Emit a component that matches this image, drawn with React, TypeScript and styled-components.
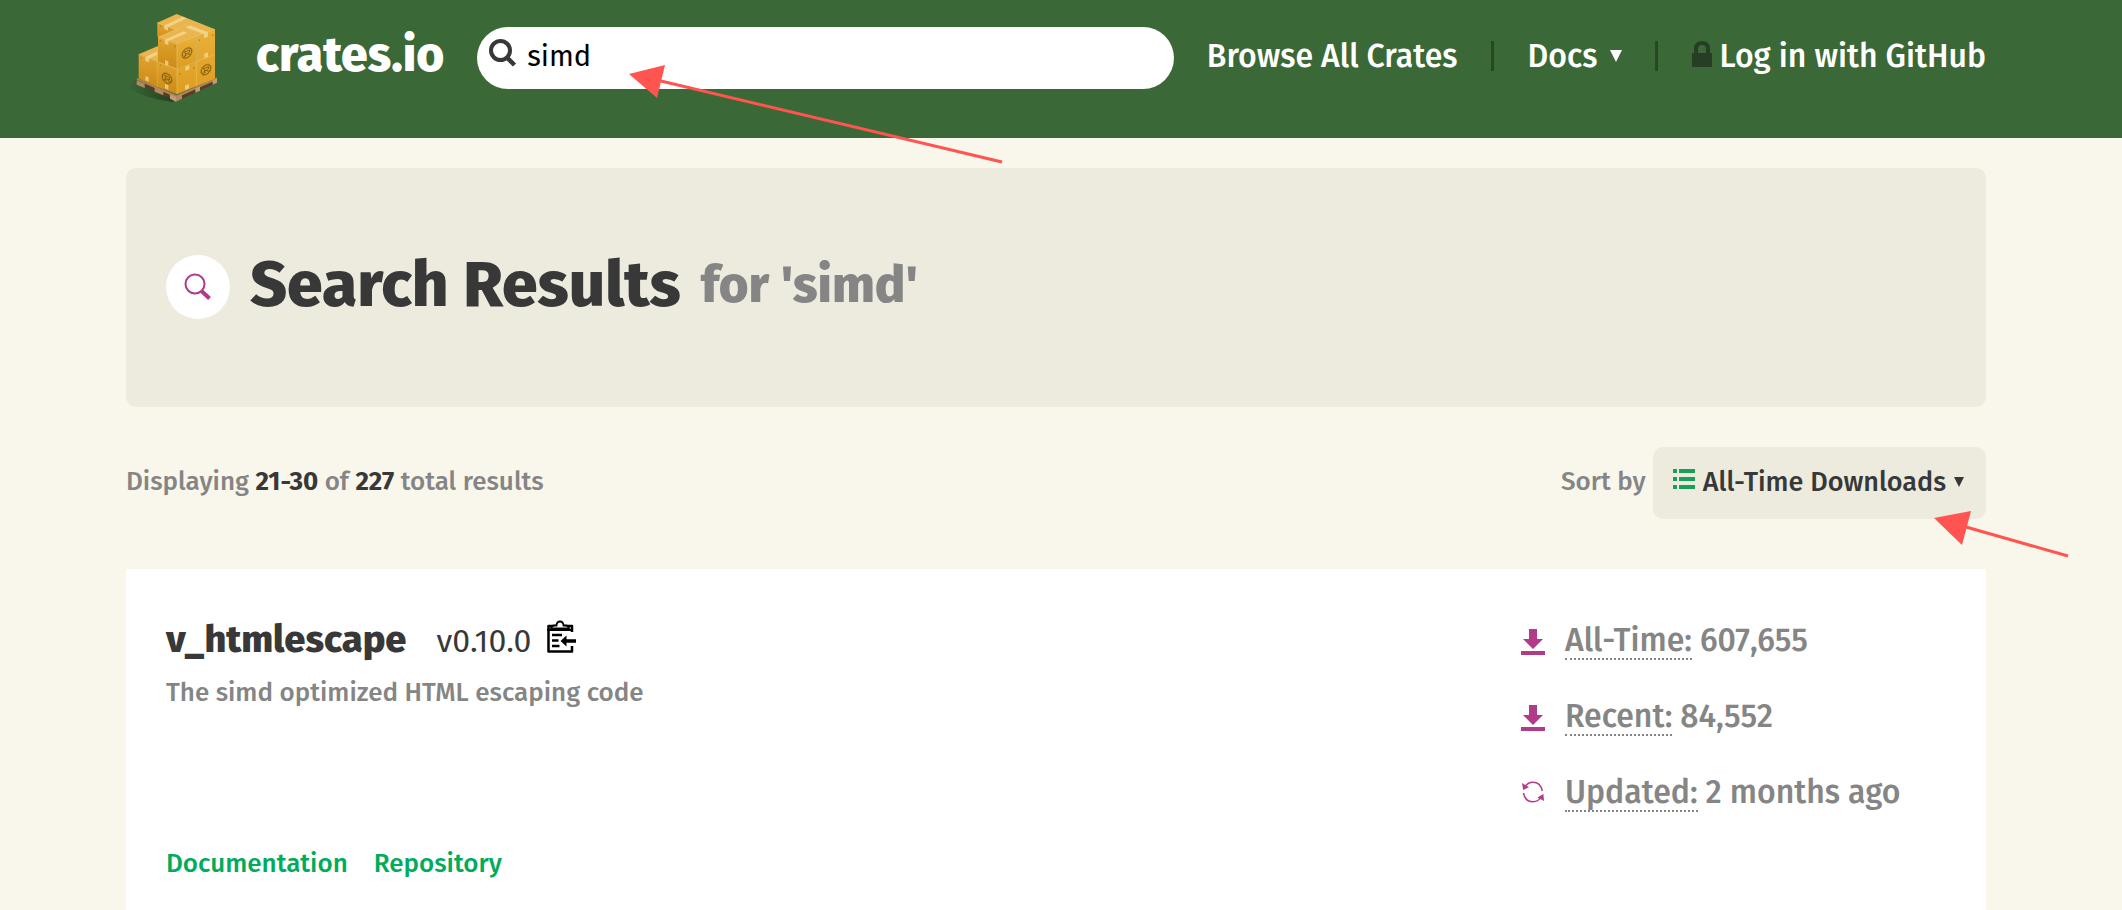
import React, { useState } from 'react';
import styled, { createGlobalStyle } from 'styled-components';

const colors = {
  green: '#3b6837',
  darkGreen: '#284725',
  cream: '#f9f7ec',
  sand: '#ecebde',
  text: '#383838',
  muted: '#858585',
  link: '#00ac5b',
  purple: '#b13b89',
  red: '#ff544f',
};

const GlobalStyle = createGlobalStyle`
  *, *::before, *::after { box-sizing: border-box; }
  body {
    margin: 0;
    background: ${colors.cream};
    color: ${colors.text};
    font-family: "Fira Sans", "Noto Sans CJK JP", "Noto Sans", sans-serif;
    font-weight: 500;
    -webkit-font-smoothing: antialiased;
  }
  button, input { font: inherit; color: inherit; border: 0; background: none; }
  a { color: inherit; text-decoration: none; }
  h1, h2, p, ul { margin: 0; padding: 0; font-size: inherit; }
  ul { list-style: none; }
  svg { display: block; flex: none; }
`;

const Page = styled.div`
  display: flex;
  flex-direction: column;
  min-height: 100vh;
  overflow-x: clip;
`;

const Header = styled.header`
  display: flex;
  align-items: flex-start;
  padding: 12px 136px 34px 126px;
  background: ${colors.green};
  color: #fff;
`;

const HomeLink = styled.a`
  display: flex;
  align-items: flex-start;
  gap: 38px;
  margin-right: 33px;
  font-size: 48px;
  font-weight: 800;
  line-height: 86px;
`;

const SearchForm = styled.form`
  position: relative;
  flex: 1;
  min-width: 200px;
  margin: 15px 33px 0 0;
`;

const SearchInput = styled.input`
  display: block;
  width: 100%;
  height: 62px;
  padding: 0 20px 4px 50px;
  border-radius: 31px;
  background: #fff;
  color: #000;
  font-size: 29px;
  font-weight: 400;
  outline: 0;
`;

const SearchGlyph = styled.svg`
  position: absolute;
  left: 11px;
  top: 11px;
`;

const Nav = styled.nav`
  display: flex;
  align-items: center;
  height: 88px;
  font-size: 32px;
  line-height: 40px;
  white-space: nowrap;
`;

const Divider = styled.span`
  width: 3px;
  height: 30px;
  margin: 0 34px 0 33px;
  background: ${colors.darkGreen};
`;

const MenuButton = styled.button`
  display: flex;
  align-items: center;
  gap: 12px;
  padding: 0;
`;

const NavLink = styled.a`
  display: flex;
  align-items: center;
  gap: 8px;
`;

const Main = styled.main`
  flex: 1;
  display: flex;
  flex-direction: column;
  padding: 30px 136px 0 126px;
`;

const Banner = styled.section`
  display: flex;
  align-items: center;
  gap: 20px;
  padding: 85px 40px 86px;
  border-radius: 10px;
  background: ${colors.sand};
`;

const BannerIcon = styled.span`
  display: grid;
  place-items: center;
  width: 64px;
  height: 64px;
  border-radius: 50%;
  background: #fff;
`;

const Title = styled.h1`
  display: flex;
  align-items: center;
  gap: 20px;
  padding-bottom: 4px;
  font-size: 64px;
  font-weight: 800;
  line-height: 64px;
`;

const Query = styled.span`
  color: ${colors.muted};
  font-size: 51px;
`;

const ResultsBar = styled.div`
  display: flex;
  align-items: center;
  justify-content: space-between;
  margin: 40px 0 50px;
  color: ${colors.muted};
  font-size: 26px;
  line-height: 34px;
`;

const BarText = styled.p`
  padding-bottom: 2px;
`;

const Strong = styled.strong`
  color: ${colors.text};
  font-weight: 700;
`;

const Sort = styled.div`
  position: relative;
  display: flex;
  align-items: center;
  gap: 7px;
`;

const SortButton = styled.button`
  display: flex;
  align-items: center;
  gap: 8px;
  padding: 18px 22px 20px 20px;
  border-radius: 10px;
  background: ${colors.sand};
  color: ${colors.text};
  font-size: 27px;
  line-height: 34px;
`;

const Card = styled.article`
  flex: 1;
  display: flex;
  justify-content: space-between;
  padding: 40px 40px 24px;
  background: #fff;
`;

const Heading = styled.div`
  display: flex;
  align-items: baseline;
  line-height: 60px;
`;

const CrateName = styled.h2`
  margin-right: 30px;
  font-size: 38px;
  font-weight: 800;
`;

const Version = styled.span`
  margin-right: 16px;
  font-size: 32px;
  font-weight: 400;
`;

const CopyButton = styled.button`
  align-self: center;
  padding: 0 0 8px;
  color: #000;
`;

const Description = styled.p`
  margin: 4px 0 135px;
  color: ${colors.muted};
  font-size: 26px;
  line-height: 36px;
`;

const Links = styled.ul`
  display: flex;
  gap: 26px;
  color: ${colors.link};
  font-size: 26px;
  line-height: 36px;
`;

const Stats = styled.ul`
  display: flex;
  flex-direction: column;
  gap: 14px;
  width: 425px;
  color: ${colors.muted};
  font-size: 32px;
`;

const Stat = styled.li`
  display: flex;
  align-items: center;
  gap: 20px;
  line-height: 62px;
`;

const StatLabel = styled.span`
  display: inline-block;
  margin-right: 8px;
  border-bottom: 2px dotted ${colors.muted};
  line-height: 36px;
`;

const SearchArrow = styled.svg`
  position: absolute;
  left: 150px;
  top: 34px;
  pointer-events: none;
`;

const SortArrow = styled.svg`
  position: absolute;
  right: -84px;
  top: 62px;
  pointer-events: none;
`;

const Caret = ({ size, color }: { size: number; color: string }) => (
  <svg width={size} height={size} viewBox="0 0 12 12" aria-hidden="true">
    <path d="M0 0h12L6 12z" fill={color} />
  </svg>
);

const RustMark = ({ x, y, skew }: { x: number; y: number; skew: number }) => (
  <g transform={`translate(${x} ${y}) skewY(${skew})`} fill="none" stroke="#8a6212">
    <circle r="14" strokeWidth="3" />
    <circle r="16" strokeWidth="2" strokeDasharray="2 3" />
    <path d="M-9-6H3q5 0 5 4t-5 4h-8M-5-6V7M-9 7h8M2 2l4 5h5" strokeWidth="3" />
  </g>
);

const CratesLogo = () => (
  <svg width="92" height="92" viewBox="18 36 276 276" aria-hidden="true">
    <defs>
      <linearGradient id="shade" x1="0" x2="1">
        <stop offset="0" stopColor="#1d3a1a" stopOpacity="0" />
        <stop offset="1" stopColor="#1d3a1a" stopOpacity=".9" />
      </linearGradient>
      <linearGradient id="left" x1="0" x2="0" y1="0" y2="1">
        <stop offset="0" stopColor="#e0a42f" />
        <stop offset="1" stopColor="#cb8b16" />
      </linearGradient>
      <linearGradient id="right" x1="0" x2="0" y1="0" y2="1">
        <stop offset="0" stopColor="#e9b038" />
        <stop offset="1" stopColor="#dd9d20" />
      </linearGradient>
    </defs>
    <path d="M18 262l36-28 116 56-10 16q-80-8-142-44z" fill="url(#shade)" />
    <path d="M50 236l120 52 121-54v14l-121 56-120-54z" fill="#5b3c23" />
    <path d="M50 234l120 52 121-54v7l-121 54-120-53z" fill="#a8835e" />
    <path d="M50 241l24 10v13l-24-10zM104 262l26 11v13l-26-11zM168 290l18-8v14l-18 9z" fill="#b18a63" />
    <path d="M150 283l18 7v15l-18-9zM226 265l14-6v13l-14 6zM278 241l13-6v13l-13 6z" fill="#c39c74" />
    <path d="M56 163l56-24 59 22v50l-59-26z" fill="#e9b54c" />
    <path d="M56 163l56 22v76l-56-25z" fill="url(#left)" />
    <path d="M112 68l58-26 115 46-56 22-58 22z" fill="#e9b54c" />
    <path d="M112 68l59 22v42l-59-22z" fill="url(#left)" />
    <path d="M112 185l59 22v76l-59-22z" fill="url(#left)" />
    <path d="M171 207l58-23v75l-58 24zM229 184l56-21v73l-56 23zM229 108l56-20v75l-56 21z" fill="url(#right)" />
    <path d="M171 87l27-15 87 16-56 22z" fill="#e9b54c" />
    <path d="M114 112l57-25 58 21-58 25z" fill="#e9b54c" />
    <path d="M114 112l57 21v74l-57-22z" fill="url(#left)" />
    <path d="M171 133l58-25v76l-58 23z" fill="url(#right)" />
    <g fill="none" stroke="#f0c874" strokeWidth="1.5">
      <path d="M56 163l56 22v76M112 185l59 22v76M171 207l58-23v75M229 184l56-21M114 112l57 21v74M171 133l58-25v76M229 108l56-20M112 68l58 22 28-18M171 87l-57 25" />
    </g>
    <g fill="#f6dda2" opacity=".7">
      <path d="M132 77l56-27 12 5-56 27v10l-12-5zM134 119l56-25 12 5-57 24v12l-11-4zM196 82l14-6 54 21v13l-12 5v-12z" />
      <path d="M76 171l36-17v10l-25 12v11l-11-4zM135 180l10 4v14l-10-4zM76 228l10 4v13l-10-4zM135 252l10 4v13l-10-4zM196 200l12-5v13l-12 5zM253 161l11-4v13l-11 4zM195 257l12-5v13l-12 5z" />
    </g>
    <RustMark x={201} y={159} skew={-22} />
    <RustMark x={141} y={235} skew={20} />
    <RustMark x={258} y={209} skew={-20} />
    <path d="M121 76v4M121 121v4M165 137v5M63 172v4M121 194v4M180 219v4M222 202v5M238 118v5M278 103v5" stroke="#8a6212" strokeWidth="2" />
  </svg>
);

const LockIcon = () => (
  <svg width="20" height="30" viewBox="0 0 20 30" aria-hidden="true">
    <path d="M2 12V8q0-8 8-8t8 8v4h2v14H0V12zm4 0h8V8q0-4-4-4T6 8z" fill="#283d25" />
  </svg>
);

const ListIcon = () => (
  <svg width="22" height="28" viewBox="0 2 22 28" aria-hidden="true">
    <path d="M0 3h4v4H0zM6 3h16v4H6zM0 11h4v4H0zM6 11h16v4H6zM0 19h4v4H0zM6 19h16v4H6z" fill="#1b9e5a" />
  </svg>
);

const ClipboardIcon = () => (
  <svg width="30" height="34" viewBox="0 0 30 34" aria-hidden="true">
    <path d="M25 13V7H1.500v25.500H25V27" fill="none" stroke="currentColor" strokeWidth="2.500" strokeLinejoin="round" />
    <path d="M0 9.800h26v2.200H0z" fill="currentColor" />
    <path d="M4 9.500q0-2.800 4-3h1.500q.3-4 3.500-4t3.500 4H18q4 .2 4 3z" fill="#fff" stroke="currentColor" strokeWidth="1.800" />
    <path d="M5 16h10M5 21.500h6.500M5 27h7.500" stroke="currentColor" strokeWidth="2.500" />
    <path d="M13.500 22l6-5.500v3.700H29v3.600h-9.500v3.700z" fill="currentColor" />
  </svg>
);

const DownloadIcon = () => (
  <svg width="24" height="30" viewBox="0 -4 24 30" aria-hidden="true">
    <path d="M8 0h8v10h6L12 20 2 10h6zM0 22h24v4H0z" fill={colors.purple} />
  </svg>
);

const UpdateIcon = () => (
  <svg width="24" height="24" viewBox="0 0 24 24" aria-hidden="true">
    <g fill="none" stroke={colors.purple} strokeWidth="1.500">
      <path d="M3.500 7.500Q6.500 2.200 12 2.200q7.500 0 9.300 8.800" />
      <path d="M20.500 16.500Q17.500 21.800 12 21.800 4 21.800 2.500 13" />
    </g>
    <path d="M1 3l1.200 7L8 7.200zM23 21l-.6-7-6 3.500z" fill={colors.purple} />
  </svg>
);

const stats = [
  { label: 'All-Time:', value: '607,655', icon: <DownloadIcon /> },
  { label: 'Recent:', value: '84,552', icon: <DownloadIcon /> },
  { label: 'Updated:', value: '2 months ago', icon: <UpdateIcon /> },
];

export default function App() {
  const [query, setQuery] = useState('simd');
  return (
    <Page>
      <GlobalStyle />
      <Header>
        <HomeLink href="/">
          <CratesLogo />
          crates.io
        </HomeLink>
        <SearchForm role="search" onSubmit={e => e.preventDefault()}>
          <SearchInput aria-label="Search" value={query} onChange={e => setQuery(e.target.value)} />
          <SearchGlyph width="30" height="30" viewBox="0 0 30 30" aria-hidden="true">
            <circle cx="12.500" cy="12.500" r="9.500" fill="none" stroke={colors.text} strokeWidth="4" />
            <path d="M19 19.500l7.500 7.500" stroke={colors.text} strokeWidth="4.500" />
          </SearchGlyph>
          <SearchArrow width="378" height="104" viewBox="0 0 378 104" aria-hidden="true">
            <path d="M34 20l341 81" stroke={colors.red} strokeWidth="3" />
            <path d="M2 13l36-9-8 33z" fill={colors.red} />
          </SearchArrow>
        </SearchForm>
        <Nav>
          <NavLink href="/crates">Browse All Crates</NavLink>
          <Divider />
          <MenuButton type="button" aria-haspopup="menu">
            Docs <Caret size={12} color="#fff" />
          </MenuButton>
          <Divider />
          <NavLink href="/login">
            <LockIcon />
            Log in with GitHub
          </NavLink>
        </Nav>
      </Header>
      <Main>
        <Banner>
          <BannerIcon>
            <svg width="28" height="28" viewBox="0 0 28 28" aria-hidden="true">
              <circle cx="11" cy="11" r="9.500" fill="none" stroke={colors.purple} strokeWidth="2" />
              <path d="M17.500 18l8 7.500" stroke={colors.purple} strokeWidth="4" />
            </svg>
          </BannerIcon>
          <Title>
            Search Results <Query>for 'simd'</Query>
          </Title>
        </Banner>
        <ResultsBar>
          <BarText>
            Displaying <Strong>21-30</Strong> of <Strong>227</Strong> total results
          </BarText>
          <Sort>
            <BarText id="sort-label">Sort by</BarText>
            <SortButton type="button" aria-haspopup="menu" aria-describedby="sort-label">
              <ListIcon />
              All-Time Downloads
              <Caret size={10} color={colors.text} />
            </SortButton>
            <SortArrow width="136" height="50" viewBox="0 0 136 50" aria-hidden="true">
              <path d="M32 18l102 29" stroke={colors.red} strokeWidth="3" />
              <path d="M0 9l37-7-9 34z" fill={colors.red} />
            </SortArrow>
          </Sort>
        </ResultsBar>
        <Card>
          <div>
            <Heading>
              <CrateName>
                <a href="/crates/v_htmlescape">v_htmlescape</a>
              </CrateName>
              <Version>v0.10.0</Version>
              <CopyButton type="button" aria-label="Copy Cargo.toml snippet to clipboard">
                <ClipboardIcon />
              </CopyButton>
            </Heading>
            <Description>The simd optimized HTML escaping code</Description>
            <Links>
              <li><a href="#documentation">Documentation</a></li>
              <li><a href="#repository">Repository</a></li>
            </Links>
          </div>
          <Stats>
            {stats.map(s => (
              <Stat key={s.label}>
                {s.icon}
                <div>
                  <StatLabel>{s.label}</StatLabel>
                  {s.value}
                </div>
              </Stat>
            ))}
          </Stats>
        </Card>
      </Main>
    </Page>
  );
}
